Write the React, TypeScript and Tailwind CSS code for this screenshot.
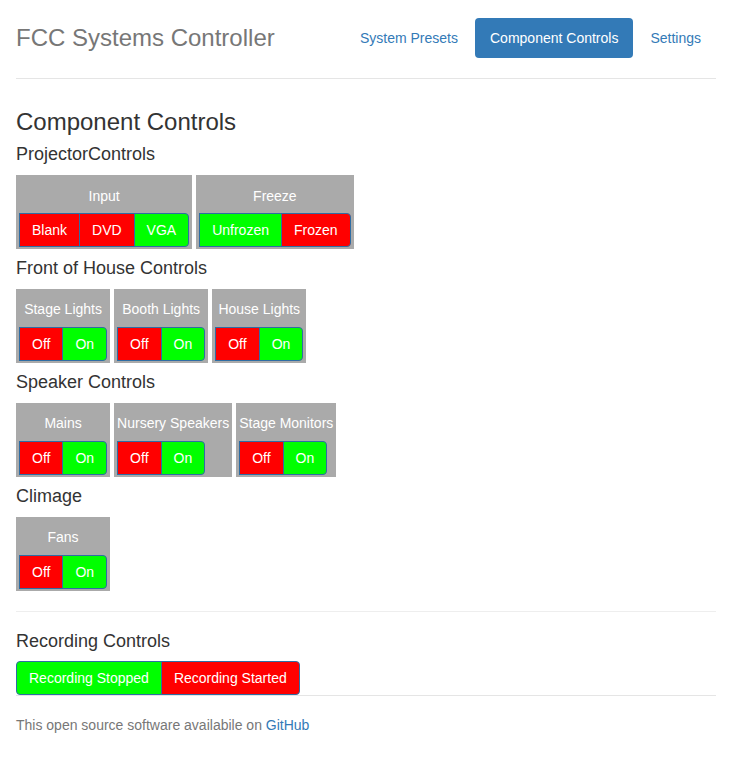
import React from 'react';

type Option = { label: string; on: boolean };
type Control = { name: string; options: Option[] };
type Group = { title: string; controls: Control[] };

const offOn: Option[] = [
    { label: 'Off', on: false },
    { label: 'On', on: true },
];

const groups: Group[] = [
    {
        title: 'ProjectorControls',
        controls: [
            {
                name: 'Input',
                options: [
                    { label: 'Blank', on: false },
                    { label: 'DVD', on: false },
                    { label: 'VGA', on: true },
                ],
            },
            {
                name: 'Freeze',
                options: [
                    { label: 'Unfrozen', on: true },
                    { label: 'Frozen', on: false },
                ],
            },
        ],
    },
    {
        title: 'Front of House Controls',
        controls: [
            { name: 'Stage Lights', options: offOn },
            { name: 'Booth Lights', options: offOn },
            { name: 'House Lights', options: offOn },
        ],
    },
    {
        title: 'Speaker Controls',
        controls: [
            { name: 'Mains', options: offOn },
            { name: 'Nursery Speakers', options: offOn },
            { name: 'Stage Monitors', options: offOn },
        ],
    },
    {
        title: 'Climage',
        controls: [{ name: 'Fans', options: offOn }],
    },
];

function ButtonGroup({ options, roundLeft }: { options: Option[]; roundLeft?: boolean }) {
    return (
        <div className="flex self-start h-[34px]">
            {options.map((opt, i) => (
                <button
                    key={opt.label}
                    className={[
                        'h-[34px] px-3 border border-[#2e6da4] text-white text-sm leading-5 whitespace-nowrap',
                        opt.on ? 'bg-[#00ff00]' : 'bg-[#ff0000]',
                        i > 0 ? '-ml-px' : '',
                        i === options.length - 1 ? 'rounded-r-[4px]' : '',
                        i === 0 && roundLeft ? 'rounded-l-[4px]' : '',
                    ].join(' ')}
                >
                    {opt.label}
                </button>
            ))}
        </div>
    );
}

function ControlPanel({ control }: { control: Control }) {
    return (
        <div className="flex flex-col bg-[#aaaaaa] px-[3px] pt-[3px] pb-[2px]">
            <div className="h-[35px] flex items-center justify-center text-white text-sm whitespace-nowrap">
                {control.name}
            </div>
            <ButtonGroup options={control.options} />
        </div>
    );
}

export default function App() {
    return (
        <div
            className="min-h-screen bg-white text-[#333333] text-sm leading-5"
            style={{ fontFamily: '"Liberation Sans", Arial, sans-serif' }}
        >
            <div className="ml-[16px] w-[700px]">
                {/* Header */}
                <div className="flex items-center justify-between pt-[18px] pb-[20px] border-b border-[#e5e5e5]">
                    <h3 className="text-[24px] leading-[40px] text-[#777777]">FCC Systems Controller</h3>
                    <nav className="flex gap-[2px]">
                        <a className="px-[15px] py-[10px] leading-5 text-[#337ab7] rounded-[4px]">System Presets</a>
                        <a className="px-[15px] py-[10px] leading-5 text-white bg-[#337ab7] rounded-[4px]">Component Controls</a>
                        <a className="px-[15px] py-[10px] leading-5 text-[#337ab7] rounded-[4px]">Settings</a>
                    </nav>
                </div>

                {/* Controls */}
                <h3 className="text-[24px] leading-[1.1] mt-[30px] mb-[10px]">Component Controls</h3>
                {groups.map((group, gi) => (
                    <div key={group.title}>
                        <h4 className={`text-[18px] leading-[1.1] mb-[10px] ${gi === 0 ? '' : 'mt-[10px]'}`}>{group.title}</h4>
                        <div className="flex items-start gap-1">
                            {group.controls.map((c) => (
                                <ControlPanel key={c.name} control={c} />
                            ))}
                        </div>
                    </div>
                ))}

                <hr className="mt-[20px] border-t border-[#eeeeee]" />

                {/* Recording */}
                <h4 className="text-[18px] leading-[1.1] mt-[20px] mb-[10px]">Recording Controls</h4>
                <ButtonGroup
                    roundLeft
                    options={[
                        { label: 'Recording Stopped', on: true },
                        { label: 'Recording Started', on: false },
                    ]}
                />

                {/* Footer */}
                <footer className="border-t border-[#e5e5e5] pt-[19px] text-[#777777]">
                    <p>
                        This open source software availabile on <a className="text-[#337ab7]">GitHub</a>
                    </p>
                </footer>
            </div>
        </div>
    );
}
